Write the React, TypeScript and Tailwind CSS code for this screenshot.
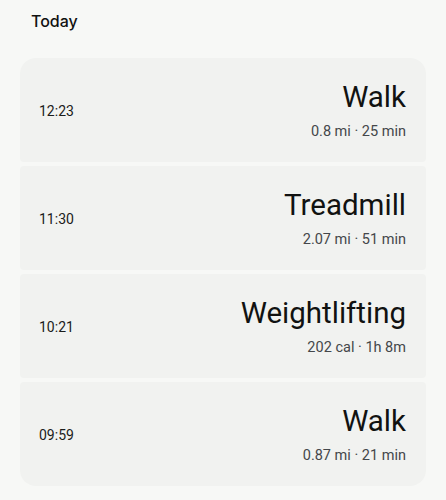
const sessions = [
  { id: "1", time: "12:23", title: "Walk", detail: "0.8 mi · 25 min" },
  { id: "2", time: "11:30", title: "Treadmill", detail: "2.07 mi · 51 min" },
  { id: "3", time: "10:21", title: "Weightlifting", detail: "202 cal · 1h 8m" },
  { id: "4", time: "09:59", title: "Walk", detail: "0.87 mi · 21 min" },
];

export default function App() {
  return (
    <div
      className="w-[446px] h-[500px] bg-[#f7f8f6] px-5 overflow-hidden"
      style={{ fontFamily: "Roboto, 'Noto Sans', sans-serif" }}
    >
      <h2 className="pt-[10px] pl-[11px] text-[16px] leading-[22px] font-medium font-['Inter'] text-[#111211]">
        Today
      </h2>

      <div className="mt-[26px] flex flex-col gap-[4px]">
        {sessions.map((s, i) => (
          <div
            key={s.id}
            className={
              "h-[104px] bg-[#f1f2f0] flex items-center justify-between pl-[19px] pr-5 " +
              (i === 0
                ? "rounded-t-[16px] rounded-b-[4px]"
                : i === sessions.length - 1
                ? "rounded-b-[16px] rounded-t-[4px]"
                : "rounded-[4px]")
            }
          >
            <span className="text-[14px] text-[#1b1c1a] mt-[2px]">{s.time}</span>
            <div className="flex flex-col items-end">
              <span className="text-[29.5px] leading-[36px] font-normal text-[#111211]">{s.title}</span>
              <span className="text-[14.5px] leading-[20px] mt-[7px] text-[#44474a]">{s.detail}</span>
            </div>
          </div>
        ))}
      </div>
    </div>
  );
}
